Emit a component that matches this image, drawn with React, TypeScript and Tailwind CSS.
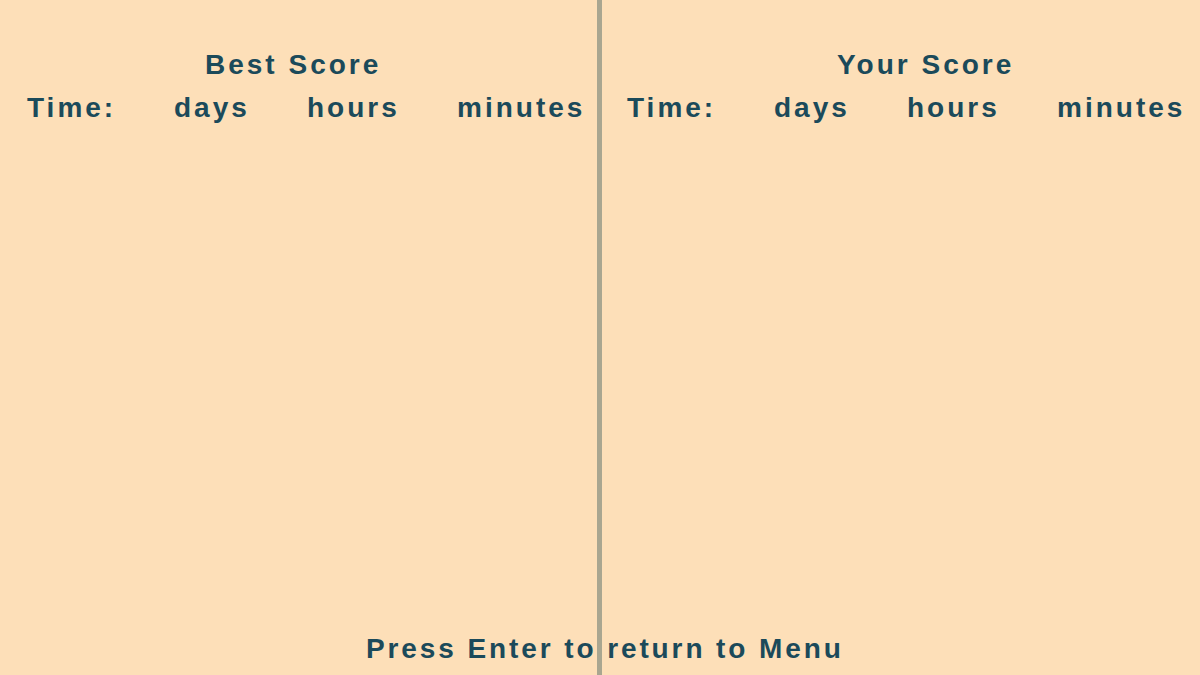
export default function App() {
  const font = { fontFamily: '"Liberation Sans", Arial, sans-serif' };
  const TimeRow = () => (
    <div className="flex items-baseline text-[28px] font-bold tracking-[3px] leading-none">
      <span className="w-[147px]">Time:</span>
      <span className="w-[133px]">days</span>
      <span className="w-[150px]">hours</span>
      <span>minutes</span>
    </div>
  );
  return (
    <div style={font} className="relative w-[1200px] h-[675px] bg-[#fddfb8] text-[#1b4a5a] flex overflow-hidden">
      {/* best score */}
      <div className="w-[597px] flex flex-col pt-[51px] pl-[27px]">
        <div className="pl-[178px] text-[28px] font-bold tracking-[3px] leading-none">Best Score</div>
        <div className="mt-[15px]">
          <TimeRow />
        </div>
      </div>
      <div className="w-[5px] h-full bg-[#a9a690] z-10" />
      {/* your score */}
      <div className="flex-1 flex flex-col pt-[51px] pl-[25px]">
        <div className="pl-[210px] text-[28px] font-bold tracking-[3px] leading-none">Your Score</div>
        <div className="mt-[15px]">
          <TimeRow />
        </div>
      </div>
      <div className="absolute bottom-[12px] left-[366px] text-[28px] font-bold tracking-[2.9px] leading-none">
        Press Enter to return to Menu
      </div>
    </div>
  );
}
